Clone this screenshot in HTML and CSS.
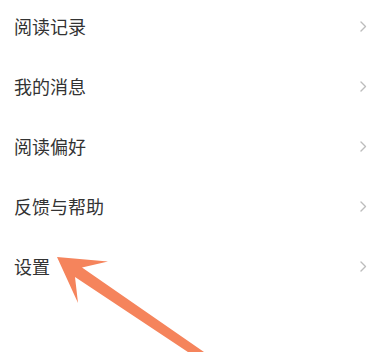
FILE: index.html
```
<!DOCTYPE html>
<html>
<head>
<meta name="viewport" content="width=device-width, initial-scale=1">
<link rel="stylesheet" href="styles.css">
</head>
<body>

<ul class="menu">
	<li class="menu-item"><span>阅读记录</span><svg class="chevron" viewBox="0 0 7 11"><polyline points="1,1 5.5,5.5 1,10"/></svg></li>
	<li class="menu-item"><span>我的消息</span><svg class="chevron" viewBox="0 0 7 11"><polyline points="1,1 5.5,5.5 1,10"/></svg></li>
	<li class="menu-item"><span>阅读偏好</span><svg class="chevron" viewBox="0 0 7 11"><polyline points="1,1 5.5,5.5 1,10"/></svg></li>
	<li class="menu-item"><span>反馈与帮助</span><svg class="chevron" viewBox="0 0 7 11"><polyline points="1,1 5.5,5.5 1,10"/></svg></li>
	<li class="menu-item"><span>设置</span><svg class="chevron" viewBox="0 0 7 11"><polyline points="1,1 5.5,5.5 1,10"/></svg></li>
</ul>

<!-- annotation arrow pointing at "设置" -->
<svg class="pointer" viewBox="0 0 380 352">
	<polygon points="57,257 108,261.5 82,267.5 230,370 215,370 75,277 78,303"/>
</svg>

</body>
</html>
```

FILE: styles.css
```
body {
  margin: 0;
  background: #fff;
  font-family: "Noto Sans CJK SC", "Noto Sans", sans-serif;
  overflow: hidden;
}

* {
  box-sizing: border-box;
}

.menu {
  margin: -4px 0 0 0;
  padding: 0;
  list-style: none;
}

/* one row of the settings list */
.menu-item {
  height: 60px;
  display: flex;
  align-items: center;
  justify-content: space-between;
  padding: 0 13px 0 14px;
  font-size: 18px;
  line-height: 1;
  color: #333;
}

.chevron {
  width: 7px;
  height: 11px;
  fill: none;
  stroke: #bdbdbd;
  stroke-width: 1.4;
  stroke-linecap: round;
  stroke-linejoin: round;
}

/* the orange arrow drawn over the screenshot */
.pointer {
  position: absolute;
  left: 0;
  top: 0;
  width: 380px;
  height: 352px;
  pointer-events: none;
}

.pointer polygon {
  fill: #f5845c;
}
```
